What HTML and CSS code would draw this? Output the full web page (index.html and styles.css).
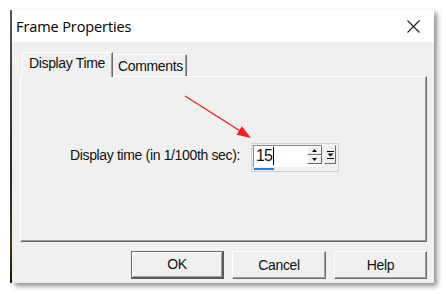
FILE: index.html
```html
<!DOCTYPE html>
<html>
<head>
<meta charset="utf-8">
<link rel="stylesheet" href="styles.css">
</head>
<body>
<div class="stage">
  <div class="backstrip"></div>
  <div class="window">
    <div class="titlebar">
      <span class="title">Frame Properties</span>
      <svg class="close" width="13" height="13" viewBox="0 0 13 13"><path d="M0.5 0.5 L12.5 12.5 M12.5 0.5 L0.5 12.5" stroke="#1a1a1a" stroke-width="1.1" fill="none"/></svg>
    </div>
    <div class="client">
      <div class="tabs">
        <div class="tab tab-active">Display Time</div>
        <div class="tab tab-idle">Comments</div>
      </div>
      <div class="panel">
        <div class="field-row">
          <span class="field-label">Display time (in 1/100th sec):</span>
          <div class="spin-frame">
            <div class="spin-row">
              <div class="edit">
                <span class="edit-text">15</span><span class="caret"></span>
                <div class="updown">
                  <div class="ud-btn"><svg width="5" height="3" viewBox="0 0 5 3"><path d="M2.5 0 L5 3 L0 3 Z" fill="#000"/></svg></div>
                  <div class="ud-btn"><svg width="5" height="3" viewBox="0 0 5 3"><path d="M0 0 L5 0 L2.5 3 Z" fill="#000"/></svg></div>
                </div>
              </div>
              <div class="drop-btn"><svg width="7" height="8" viewBox="0 0 7 8"><path d="M0 0.5 H7" stroke="#000" stroke-width="1"/><path d="M0.5 2.5 H6.5 L3.5 5.5 Z" fill="#000"/><path d="M0 7.5 H7" stroke="#000" stroke-width="1"/></svg></div>
            </div>
            <div class="focus-line"></div>
          </div>
        </div>
      </div>
      <div class="buttons">
        <div class="btn btn-default">OK</div>
        <div class="btn btn-wide">Cancel</div>
        <div class="btn">Help</div>
      </div>
    </div>
  </div>
</div>
<svg class="arrow" width="446" height="294" viewBox="0 0 446 294">
  <line x1="185" y1="96" x2="241" y2="131.5" stroke="#ee2020" stroke-width="1.4"/>
  <path d="M251 138 L236.5 134.7 L241.9 126.3 Z" fill="#ee2020"/>
</svg>
</body>
</html>
```

FILE: styles.css
```css
html, body {
  margin: 0;
  padding: 0;
}
body {
  width: 446px;
  height: 294px;
  background: #ffffff;
  position: relative;
  overflow: hidden;
  font-family: "Liberation Sans", Arial, sans-serif;
  font-size: 14px;
  letter-spacing: -0.35px;
  color: #111;
}
.stage {
  display: flex;
  padding: 10px 0 0 10px;
}
.backstrip {
  width: 2px;
  height: 273px;
  background: linear-gradient(#5a5a5a, #2a2a2a 60%, #4a3a18 85%, #201808);
}
.window {
  width: 422px;
  height: 273px;
  display: flex;
  flex-direction: column;
  background: #f0f0f0;
  box-shadow: 3px 3px 5px rgba(0, 0, 0, 0.45);
}
.titlebar {
  height: 32px;
  background: #ffffff;
  display: flex;
  align-items: center;
  padding-left: 4px;
}
.title {
  font-family: "Open Sans", "Noto Sans", sans-serif;
  font-size: 14.5px;
  letter-spacing: -0.1px;
  color: #000;
}
.close {
  margin-left: auto;
  margin-right: 14px;
}
.client {
  flex: 1;
  padding: 10px 7px 0 8px;
}
.tabs {
  display: flex;
  align-items: flex-end;
  margin-left: 2px;
  height: 24px;
  position: relative;
  z-index: 1;
}
.tab {
  box-sizing: border-box;
  background: #f0f0f0;
  border-left: 1px solid #ffffff;
  border-top: 1px solid #ffffff;
  border-right: 1px solid #696969;
  box-shadow: inset -1px 0 0 #a0a0a0;
  line-height: 15px;
  white-space: nowrap;
}
.tab-active {
  width: 91px;
  height: 25px;
  margin-bottom: -1px;
  padding: 3px 0 0 6px;
}
.tab-idle {
  width: 74px;
  height: 22px;
  padding: 4px 0 0 5px;
  border-left: none;
}
.panel {
  box-sizing: border-box;
  width: 407px;
  height: 166px;
  border-top: 1px solid #ffffff;
  border-left: 1px solid #ffffff;
  border-right: 1px solid #696969;
  border-bottom: 1px solid #696969;
  box-shadow: inset -1px -1px 0 #a0a0a0;
  padding: 66px 0 0 49px;
}
.field-row {
  display: flex;
  align-items: flex-start;
}
.field-label {
  width: 181px;
  flex: none;
  line-height: 15px;
  margin-top: 5px;
  white-space: nowrap;
}
.spin-frame {
  box-sizing: border-box;
  width: 88px;
  height: 29px;
  border: 1px solid #d2d2d2;
  padding: 1px 0 0 1px;
  display: flex;
  flex-direction: column;
}
.spin-row {
  display: flex;
  align-items: flex-start;
}
.edit {
  box-sizing: border-box;
  width: 69px;
  height: 22px;
  background: #ffffff;
  border-top: 1px solid #8a8a8a;
  border-left: 1px solid #8a8a8a;
  display: flex;
  align-items: flex-start;
  padding-left: 2px;
}
.edit-text {
  font-size: 16px;
  line-height: 20px;
  letter-spacing: -0.8px;
}
.caret {
  width: 1px;
  height: 18px;
  margin-top: 1px;
  margin-left: 1px;
  background: #000;
}
.updown {
  margin-left: auto;
  width: 15px;
  display: flex;
  flex-direction: column;
}
.ud-btn {
  box-sizing: border-box;
  height: 9px;
  background: #f0f0f0;
  border-top: 1px solid #ffffff;
  border-left: 1px solid #ffffff;
  border-right: 1px solid #696969;
  border-bottom: 1px solid #696969;
  display: flex;
  align-items: center;
  justify-content: center;
}
.drop-btn {
  box-sizing: border-box;
  width: 12px;
  height: 19px;
  margin-left: 2px;
  background: #f0f0f0;
  border-top: 1px solid #ffffff;
  border-left: 1px solid #ffffff;
  border-right: 1px solid #696969;
  border-bottom: 1px solid #696969;
  display: flex;
  align-items: center;
  justify-content: center;
}
.focus-line {
  width: 20px;
  height: 2px;
  margin-top: 1px;
  margin-left: 1px;
  background: #2d7bd6;
}
.buttons {
  display: flex;
  justify-content: flex-end;
  gap: 8px;
  margin-top: 9px;
}
.btn {
  box-sizing: border-box;
  width: 93px;
  height: 28px;
  background: #f0f0f0;
  border-top: 1px solid #ffffff;
  border-left: 1px solid #ffffff;
  border-right: 1px solid #696969;
  border-bottom: 1px solid #696969;
  box-shadow: inset -1px -1px 0 #a0a0a0;
  display: flex;
  align-items: center;
  justify-content: center;
  line-height: 15px;
}
.btn-wide {
  width: 94px;
}
.btn-default {
  border-top-color: #6e6e6e;
  border-left-color: #6e6e6e;
  border-right: 2px solid #5a5a5a;
  border-bottom: 2px solid #5a5a5a;
  box-shadow: inset 1px 1px 0 #ffffff, inset -1px -1px 0 #a0a0a0;
}
.arrow {
  position: absolute;
  left: 0;
  top: 0;
  pointer-events: none;
}
```
